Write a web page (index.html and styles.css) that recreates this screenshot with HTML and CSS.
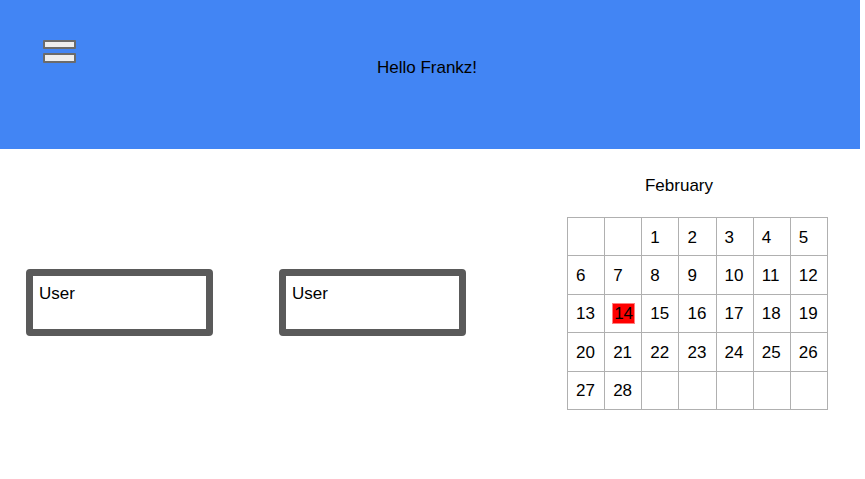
FILE: index.html
```html
<!DOCTYPE html>
<html>
<head>
<meta charset="utf-8">
<link rel="stylesheet" href="styles.css">
</head>
<body>
<header class="header">
  <div class="menu">
    <span class="bar"></span>
    <span class="bar"></span>
  </div>
  <div class="greeting">Hello Frankz!</div>
</header>
<main class="main">
  <section class="users">
    <div class="user">User</div>
    <div class="user">User</div>
  </section>
  <section class="calendar">
    <div class="month">February</div>
    <table class="cal">
      <tr><td></td><td></td><td>1</td><td>2</td><td>3</td><td>4</td><td>5</td></tr>
      <tr><td>6</td><td>7</td><td>8</td><td>9</td><td>10</td><td>11</td><td>12</td></tr>
      <tr><td>13</td><td><span class="today">14</span></td><td>15</td><td>16</td><td>17</td><td>18</td><td>19</td></tr>
      <tr><td>20</td><td>21</td><td>22</td><td>23</td><td>24</td><td>25</td><td>26</td></tr>
      <tr><td>27</td><td>28</td><td></td><td></td><td></td><td></td><td></td></tr>
    </table>
  </section>
</main>
</body>
</html>
```
FILE: styles.css
```css
* { box-sizing: border-box; }
html, body { margin: 0; padding: 0; background: #fff; }
body {
  font-family: "Liberation Sans", Arial, sans-serif;
  font-size: 17px;
  color: #000;
  width: 860px;
}
.header {
  height: 149px;
  background: #4285f4;
  display: flex;
  align-items: flex-start;
  padding: 40px 0 0 43px;
}
.menu {
  display: flex;
  flex-direction: column;
  gap: 4px;
  width: 33px;
}
.bar {
  display: block;
  height: 9px;
  background: #eeeeee;
  border: 2px solid #6b6b6b;
  border-radius: 1px;
}
.bar + .bar { height: 10px; }
.greeting {
  flex: 1;
  text-align: center;
  margin-top: 18px;
  padding-right: 82px;
  line-height: 19px;
}
.main {
  display: flex;
  align-items: flex-start;
  padding: 27px 0 0 26px;
}
.users {
  display: flex;
  gap: 66px;
  margin-top: 93px;
}
.user {
  width: 187px;
  height: 67px;
  border: 7px solid #5a5a5a;
  border-radius: 4px;
  padding: 8px 0 0 6px;
  line-height: 19px;
}
.calendar {
  margin-left: 101px;
  width: 261px;
}
.month {
  text-align: center;
  margin-right: 37px;
  line-height: 19px;
  height: 41px;
}
.cal {
  border-collapse: collapse;
  table-layout: fixed;
  width: 261px;
}
.cal td {
  border: 1px solid #b0b0b0;
  height: 38.4px;
  width: 37px;
  padding: 1px 0 0 8px;
  vertical-align: middle;
  line-height: 19px;
}
.today {
  background: #ff0000;
  outline: 1px solid #ff8080;
  padding: 0 1px;
}
```
